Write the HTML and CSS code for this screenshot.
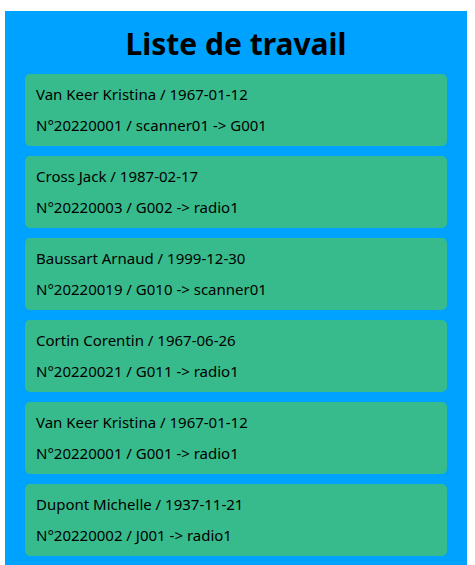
FILE: index.html
```html
<!DOCTYPE html>
<html lang="fr">
<head>
<meta charset="utf-8">
<title>Liste de travail</title>
<link rel="stylesheet" href="styles.css">
</head>
<body>
<main class="board">
  <h1 class="title">Liste de travail</h1>
  <ul class="list">
    <li class="card"><p class="line">Van Keer Kristina / 1967-01-12</p><p class="line">N°20220001 / scanner01 -&gt; G001</p></li>
    <li class="card"><p class="line">Cross Jack / 1987-02-17</p><p class="line">N°20220003 / G002 -&gt; radio1</p></li>
    <li class="card"><p class="line">Baussart Arnaud / 1999-12-30</p><p class="line">N°20220019 / G010 -&gt; scanner01</p></li>
    <li class="card"><p class="line">Cortin Corentin / 1967-06-26</p><p class="line">N°20220021 / G011 -&gt; radio1</p></li>
    <li class="card"><p class="line">Van Keer Kristina / 1967-01-12</p><p class="line">N°20220001 / G001 -&gt; radio1</p></li>
    <li class="card"><p class="line">Dupont Michelle / 1937-11-21</p><p class="line">N°20220002 / J001 -&gt; radio1</p></li>
  </ul>
</main>
</body>
</html>
```
FILE: styles.css
```css
html, body {
  margin: 0;
  padding: 0;
  background: #ffffff;
}
body {
  font-family: "Noto Sans", "Open Sans", sans-serif;
  color: #000000;
  overflow: hidden;
}
.board {
  margin: 11px 8px 0 5px;
  padding: 12px 20px 20px;
  background: #00a2ff;
}
.title {
  margin: 0 0 9px;
  font-size: 30px;
  line-height: 42px;
  font-weight: 700;
  text-align: center;
}
.list {
  list-style: none;
  margin: 0;
  padding: 0;
  display: flex;
  flex-direction: column;
  gap: 10px;
}
.card {
  background: #37bb8c;
  border-radius: 5px;
  padding: 10px 11px;
  display: flex;
  flex-direction: column;
  gap: 10px;
}
.line {
  margin: 0;
  font-size: 15px;
  line-height: 21px;
}
```
